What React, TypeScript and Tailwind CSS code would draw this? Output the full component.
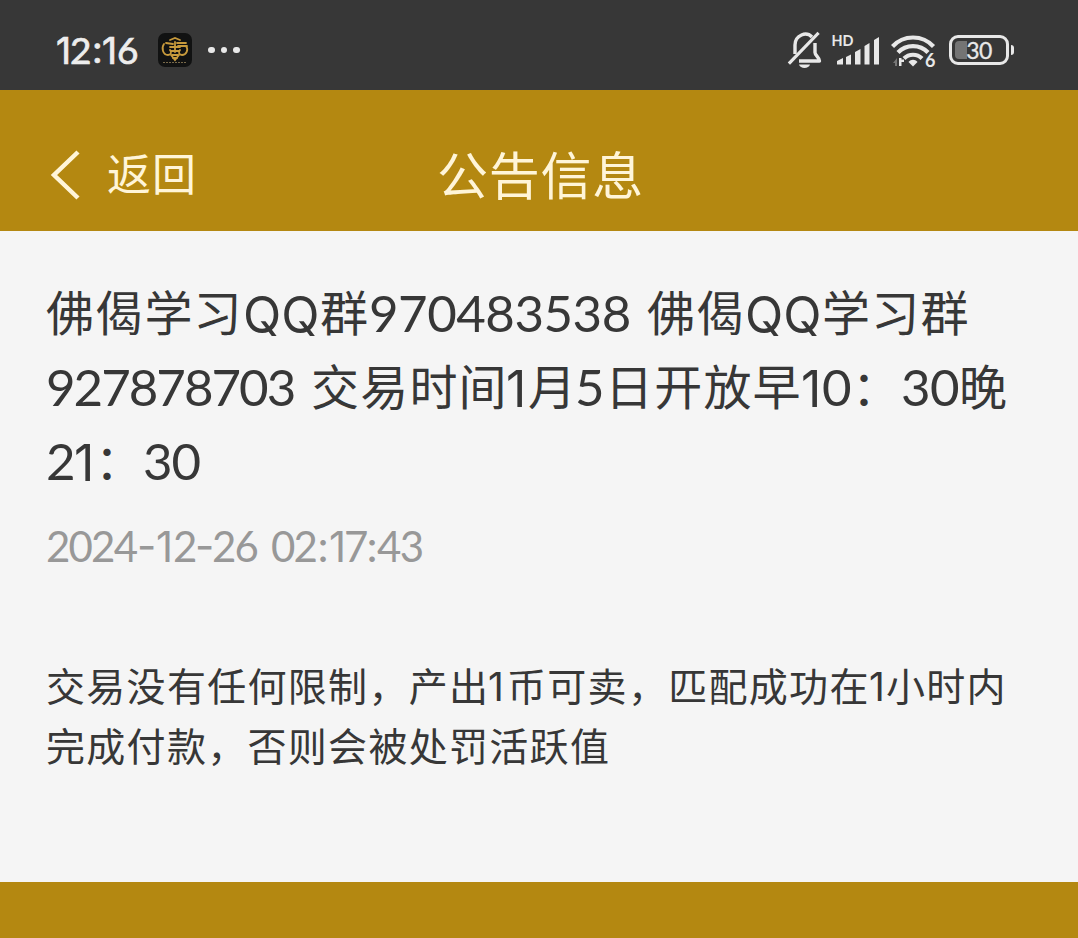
import clsx from "clsx";

type Run = { text: string; className: string };

const titleLines: Run[][] = [
    [
        { text: "佛偈学习", className: "w-[197px]" },
        { text: "QQ", className: "w-[77px] pt-[5px] font-['Inter'] text-[50px] tracking-[0px]" },
        { text: "群", className: "w-[49px]" },
        { text: "970483538 ", className: "w-[278px] pt-[3px] font-['Lato'] text-[51px] tracking-[-0.5px]" },
        { text: "佛偈", className: "w-[98px]" },
        { text: "QQ", className: "w-[77px] pt-[5px] font-['Inter'] text-[50px] tracking-[0px]" },
        { text: "学习群", className: "w-[148px]" },
    ],
    [
        { text: "927878703 ", className: "w-[265px] pt-[3px] font-['Lato'] text-[51px] tracking-[-2px]" },
        { text: "交易时间", className: "w-[195px]" },
        { text: "1", className: "w-[22px] pt-[5px] font-['Inter'] text-[50px] tracking-[0px]" },
        { text: "月", className: "w-[47px]" },
        { text: "5", className: "w-[30px] pt-[3px] font-['Lato'] text-[51px] tracking-[0px]" },
        { text: "日开放早", className: "w-[196px]" },
        { text: "1", className: "w-[21px] pt-[5px] font-['Inter'] text-[50px] tracking-[0px]" },
        { text: "0", className: "w-[30px] pt-[3px] font-['Lato'] text-[51px] tracking-[0px]" },
        { text: "：", className: "w-[49px]" },
        { text: "30", className: "w-[58px] pt-[3px] font-['Lato'] text-[51px] tracking-[-0.5px]" },
        { text: "晚", className: "w-[49px]" },
    ],
    [
        { text: "2", className: "w-[28px] pt-[3px] font-['Lato'] text-[51px] tracking-[-1px]" },
        { text: "1", className: "w-[21px] pt-[5px] font-['Inter'] text-[50px] tracking-[0px]" },
        { text: "：", className: "w-[48px]" },
        { text: "30", className: "w-[58px] pt-[3px] font-['Lato'] text-[51px] tracking-[-1px]" },
    ],
];

const dateRuns: Run[] = [
    { text: "2024", className: "w-[91px] tracking-[-1.8px]" },
    { text: "-", className: "w-[19px] font-['Inter']" },
    { text: "1", className: "w-[17px] pt-px font-['Inter']" },
    { text: "2", className: "w-[22px] tracking-[-2px]" },
    { text: "-", className: "w-[17px] font-['Inter'] tracking-[-2px]" },
    { text: "26 ", className: "w-[59px] tracking-[-1.8px]" },
    { text: "02", className: "w-[46px] tracking-[-1.8px]" },
    { text: ":", className: "w-[12px] pt-px font-['Inter']" },
    { text: "1", className: "w-[15px] pt-px font-['Inter'] tracking-[-2px]" },
    { text: "7", className: "w-[22px] tracking-[-2px]" },
    { text: ":", className: "w-[11px] pt-px font-['Inter']" },
    { text: "43", className: "w-[46px] tracking-[-1.5px]" },
];

const bodyLines: Run[][] = [
    [
        { text: "交易没有任何限制，产出", className: "w-[442px]" },
        { text: "1", className: "w-[19px] pt-[3px] font-['Inter'] tracking-[0px]" },
        { text: "币可卖，匹配成功在", className: "w-[362px]" },
        { text: "1", className: "w-[17px] pt-[3px] font-['Inter'] tracking-[0px]" },
        { text: "小时内", className: "w-[122px]" },
    ],
    [{ text: "完成付款，否则会被处罚活跃值", className: "w-[570px]" }],
];

const clockRuns: Run[] = [
    { text: "1", className: "w-[14px] pt-px font-['Inter']" },
    { text: "2", className: "w-[22px]" },
    { text: ":", className: "w-[10px] font-['Inter']" },
    { text: "1", className: "w-[15px] pt-px font-['Inter']" },
    { text: "6", className: "w-[21px]" },
];

function Line({ runs, className }: { runs: Run[]; className: string }) {
    return (
        <div className={clsx("flex whitespace-pre", className)}>
            {runs.map((run, index) => (
                <span key={index} className={clsx("block shrink-0", run.className)}>{run.text}</span>
            ))}
        </div>
    );
}

function AppBadge() {
    return (
        <svg width="34" height="34" viewBox="0 0 34 34" fill="none" className="ml-[19px]">
            <rect width="34" height="34" rx="7" fill="#111212" />
            <g stroke="#c79a3c" strokeWidth="1.8" strokeLinecap="round">
                <path d="M6 11c-3 4-1 11 4 11 3 0 4-3 2-5M28 13c3 4 0 9-4 9-3 0-4-3-2-5" />
                <path d="M12 7l5-2 5 2M8 10l7 1M19 10h9M20 13h9M12 14h10M13 18h8M13 22l4 5 4-5M17 9v10" />
                <path d="M14 22h6M15 25h4" />
            </g>
            <path d="M5 29.5h24" stroke="#77694a" strokeWidth="1" strokeDasharray="2 1" />
        </svg>
    );
}

function BellOff() {
    return (
        <svg width="36" height="38" viewBox="0 0 36 38" fill="none" stroke="#e8e8e8" strokeWidth="3.4">
            <path d="M25 6C22 3 18 2.500 14.500 4 10 6 8 9 8 14v9M28 12v9.500c0 3 4.500 5 4.500 8.500H12" strokeLinejoin="round" />
            <path d="M30.500 3L3 31.500" strokeLinecap="square" strokeWidth="3.2" />
            <path d="M12 33.500h11c-1 4.500-10 4.500-11 0z" fill="#e8e8e8" stroke="none" />
        </svg>
    );
}

function Signal() {
    return (
        <svg width="50" height="38" viewBox="0 0 50 38" fill="#e8e8e8">
            <text x="0.500" y="15" fontFamily="Lato" fontWeight="700" fontSize="15.500" textLength="22" lengthAdjust="spacingAndGlyphs">HD</text>
            <path d="M6 30l6-3v6.500H6zM15 26l5-2.500v10h-5zM24 21l5.500-3v15.500H24zM33.500 15l5-3v21.500h-5zM43 9L48 6v27.500h-5z" />
        </svg>
    );
}

function Wifi() {
    return (
        <svg width="46" height="38" viewBox="0 0 46 38" fill="none">
            <g stroke="#e8e8e8" strokeWidth="4.2">
                <path d="M1.500 15.500c11-12 30-12 41 0" />
                <path d="M7 21.500c8-8.500 22-8.500 30 0" />
                <path d="M13 27.500c5-5 13-5 18 0" />
            </g>
            <path d="M17.500 31c2.500-3 6.500-3 9 0L22 35.500z" fill="#e8e8e8" />
            <path d="M2 32L6 27v8H4v-3z" fill="#777" />
            <path d="M8 27h2.500v1.500H13V31h-2.500v4H8z" fill="#e8e8e8" />
            <text x="34" y="35.500" fill="#e8e8e8" fontFamily="Lato" fontWeight="700" fontSize="18">6</text>
        </svg>
    );
}

function Battery() {
    return (
        <div className="flex items-center text-[#e8e8e8]">
            <div className="relative flex h-[30px] w-[60px] items-center justify-center rounded-[9px] border-[3px] border-[#e8e8e8]">
                <div className="absolute inset-y-[3px] left-[3px] w-[12px] rounded-l-[4px] bg-[#747474]"></div>
                <span className="relative font-['Lato'] text-[23px] leading-none tracking-[-0.5px] [-webkit-text-stroke:0.3px_#e8e8e8]">30</span>
            </div>
            <div className="ml-[2px] h-[10px] w-[3px] rounded-r bg-[#e8e8e8]"></div>
        </div>
    );
}

function StatusBar() {
    return (
        <div className="flex h-[90px] items-center bg-[#373737] pr-[64px] pl-[56px] pt-[10px]">
            <Line runs={clockRuns} className="w-[83px] font-['Lato'] text-[37px] leading-none tracking-[-1.6px] text-[#ededed] [-webkit-text-stroke:0.7px_#ededed]" />
            <AppBadge />
            <div className="ml-[16px] flex gap-[6px]">
                <i className="h-[6.5px] w-[6.5px] rounded-full bg-[#e8e8e8]"></i>
                <i className="h-[6.5px] w-[6.5px] rounded-full bg-[#e8e8e8]"></i>
                <i className="h-[6.5px] w-[6.5px] rounded-full bg-[#e8e8e8]"></i>
            </div>
            <div className="ml-auto flex items-center">
                <BellOff />
                <div className="ml-[8px]"><Signal /></div>
                <div className="mr-[12px] ml-[10px]"><Wifi /></div>
                <Battery />
            </div>
        </div>
    );
}

export default function App() {
    return (
        <div className="flex h-[938px] w-[1078px] flex-col overflow-hidden bg-[#b48811] font-['Noto_Sans_CJK_SC',sans-serif]">
            <StatusBar />
            <header className="grid h-[141px] grid-cols-[1fr_auto_1fr] items-center pt-[29px] text-[#fff5d8]">
                <div className="flex items-center pl-[50px]">
                    <svg width="30" height="50" viewBox="0 0 30 50" fill="none" stroke="currentColor" strokeWidth="4.500">
                        <path d="M28 2L4 25l24 23" />
                    </svg>
                    <span className="ml-[27px] pb-[6px] text-[44px] leading-none tracking-[1px]">返回</span>
                </div>
                <h1 className="pb-[3px] pl-[3px] text-[51px] leading-none tracking-[0.7px]">公告信息</h1>
                <div></div>
            </header>
            <main className="h-[651px] bg-[#f5f5f5] px-[46px] pt-[42px] text-[#373737]">
                <h2>
                    {titleLines.map((runs, index) => (
                        <Line key={index} runs={runs} className="h-[74px] text-[48px] leading-[74px] tracking-[1.2px]" />
                    ))}
                </h2>
                <time>
                    <Line runs={dateRuns} className="mt-[21px] h-[60px] font-['Lato'] text-[42px] leading-[60px] text-[#989898]" />
                </time>
                <div className="mt-[78px]">
                    {bodyLines.map((runs, index) => (
                        <Line key={index} runs={runs} className="h-[60px] text-[39px] leading-[60px] tracking-[1.3px]" />
                    ))}
                </div>
            </main>
        </div>
    );
}
